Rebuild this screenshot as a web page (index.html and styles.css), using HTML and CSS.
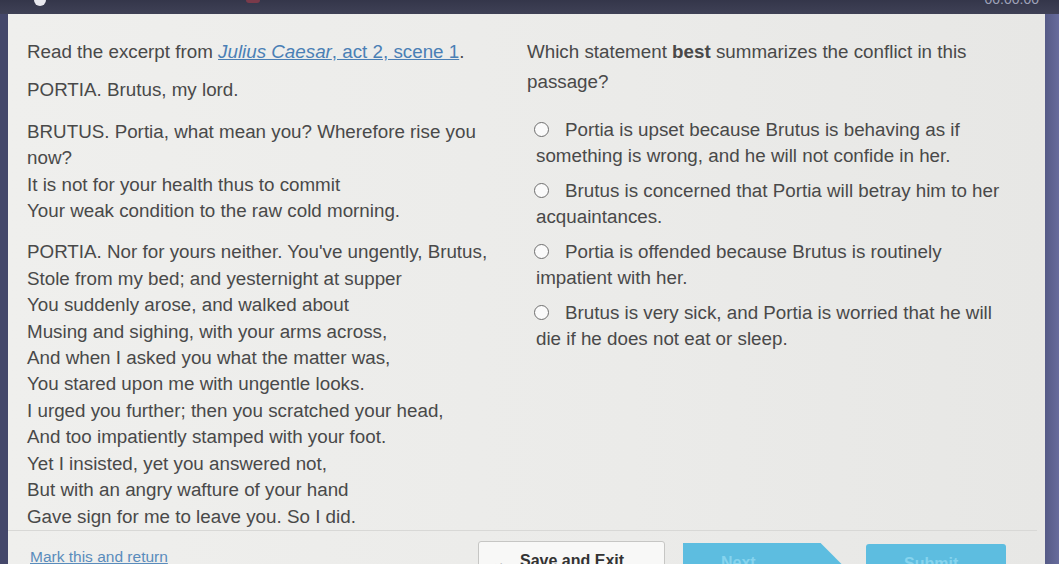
FILE: index.html
```html
<!DOCTYPE html>
<html lang="en">
<head>
<meta charset="UTF-8">
<title>Julius Caesar - Question</title>
<link rel="stylesheet" href="styles.css">
</head>
<body>

<div class="topbar">
  <span class="dot"></span>
  <span class="red"></span>
  <span class="timer">00:00:00</span>
</div>

<div class="frame">
  <div class="bezel-left"></div>

  <div class="panel">
    <div class="columns">
      <div class="passage">
        <p class="intro">Read the excerpt from <a href="#"><i>Julius Caesar</i>, act 2, scene 1</a>.</p>
        <p>PORTIA. Brutus, my lord.</p>
        <p>BRUTUS. Portia, what mean you? Wherefore rise you<br>
        now?<br>
        It is not for your health thus to commit<br>
        Your weak condition to the raw cold morning.</p>
        <p>PORTIA. Nor for yours neither. You've ungently, Brutus,<br>
        Stole from my bed; and yesternight at supper<br>
        You suddenly arose, and walked about<br>
        Musing and sighing, with your arms across,<br>
        And when I asked you what the matter was,<br>
        You stared upon me with ungentle looks.<br>
        I urged you further; then you scratched your head,<br>
        And too impatiently stamped with your foot.<br>
        Yet I insisted, yet you answered not,<br>
        But with an angry wafture of your hand<br>
        Gave sign for me to leave you. So I did.</p>
      </div>

      <div class="question">
        <p class="prompt">Which statement <b>best</b> summarizes the conflict in this<br>passage?</p>
        <ul class="options">
          <li><span class="radio"></span>Portia is upset because Brutus is behaving as if<br>something is wrong, and he will not confide in her.</li>
          <li><span class="radio"></span>Brutus is concerned that Portia will betray him to her<br>acquaintances.</li>
          <li><span class="radio"></span>Portia is offended because Brutus is routinely<br>impatient with her.</li>
          <li><span class="radio"></span>Brutus is very sick, and Portia is worried that he will<br>die if he does not eat or sleep.</li>
        </ul>
      </div>
    </div>

    <div class="footer">
      <a class="mark" href="#">Mark this and return</a>
      <button class="btn save"><span class="back">&#8617;</span>Save and Exit</button>
      <button class="btn next">Next</button>
      <button class="btn submit">Submit</button>
    </div>
  </div>

  <div class="bezel-right"></div>
</div>

</body>
</html>
```

FILE: styles.css
```css
body {
  margin: 0;
  background-color: #4a4d6b;
  font-family: "Liberation Sans", Arial, sans-serif;
  overflow: hidden;
}
.topbar {
  height: 14px;
  background: linear-gradient(to bottom, #34364a, #3f4156);
  position: relative;
}
.dot {
  position: absolute;
  left: 34px;
  top: -6px;
  width: 12px;
  height: 12px;
  border-radius: 50%;
  background-color: #e8e8ee;
}
.red {
  position: absolute;
  left: 246px;
  top: -4px;
  width: 14px;
  height: 7px;
  border-radius: 3px;
  background-color: #7a3a4a;
}
.timer {
  position: absolute;
  right: 20px;
  top: -9px;
  color: #9fa2b8;
  font-size: 14px;
}
.frame {
  display: flex;
  height: 550px;
}
.bezel-left {
  width: 8px;
  background-color: #44476a;
}
.bezel-right {
  width: 14px;
  background: linear-gradient(to right, #555a86, #676c9c);
}
.panel {
  flex: 1;
  display: flex;
  flex-direction: column;
  background: linear-gradient(to right, #efefed, #ebebe9 60%, #e7e7e5);
  color: #494949;
  min-height: 0;
}
.columns {
  flex: 1;
  min-height: 0;
  display: flex;
  padding: 25px 0 0 19px;
}
.passage {
  width: 500px;
  font-size: 18.8px;
  line-height: 26.4px;
  white-space: nowrap;
}
.passage p {
  margin: 0 0 15px;
}
.passage p:last-child {
  margin-bottom: 0;
}
.passage p.intro {
  margin-bottom: 12px;
}
.passage a {
  color: #4a7fb5;
}
.question {
  flex: 1;
  font-size: 18.8px;
  line-height: 26px;
  white-space: nowrap;
}
.prompt {
  margin: -2px 0 20px;
  line-height: 30px;
}
.options {
  list-style: none;
  margin: 0;
  padding: 0;
}
.options li {
  margin-bottom: 9px;
  padding-left: 9px;
  text-indent: 29px;
  position: relative;
}
.radio {
  position: absolute;
  left: 7px;
  top: 5px;
  width: 13px;
  height: 13px;
  border: 1.5px solid #6e6e6e;
  border-radius: 50%;
  background-color: #fafafa;
}
.footer {
  height: 33px;
  flex-shrink: 0;
  border-top: 1px solid #d8d8d6;
  margin-right: 8px;
  display: flex;
  align-items: flex-start;
  padding-left: 22px;
  overflow: hidden;
}
.mark {
  color: #5a8cbc;
  font-size: 15.5px;
  margin-top: 17px;
  width: 448px;
}
.btn {
  font-family: "Liberation Sans", Arial, sans-serif;
  font-size: 16px;
  font-weight: bold;
  height: 30px;
  border: none;
  padding: 10px 0 0;
  text-align: left;
}
.save {
  width: 187px;
  margin-top: 10px;
  padding-left: 14px;
  background-color: #f8f8f7;
  border: 1px solid #c6c6c4;
  border-radius: 3px 3px 0 0;
  color: #333;
}
.back {
  display: inline-block;
  font-size: 12px;
  color: #aaa;
  font-weight: normal;
  width: 27px;
  vertical-align: -4px;
}
.next {
  width: 160px;
  margin-top: 12px;
  margin-left: 18px;
  padding-left: 38px;
  background-color: #5dbde0;
  color: #86d4ee;
  clip-path: polygon(0 0, 86% 0, 100% 75%, 100% 100%, 0 100%);
}
.submit {
  width: 140px;
  margin-top: 13px;
  margin-left: 23px;
  padding-left: 38px;
  background-color: #5dbde0;
  color: #86d4ee;
  border-radius: 3px 3px 0 0;
}
```
